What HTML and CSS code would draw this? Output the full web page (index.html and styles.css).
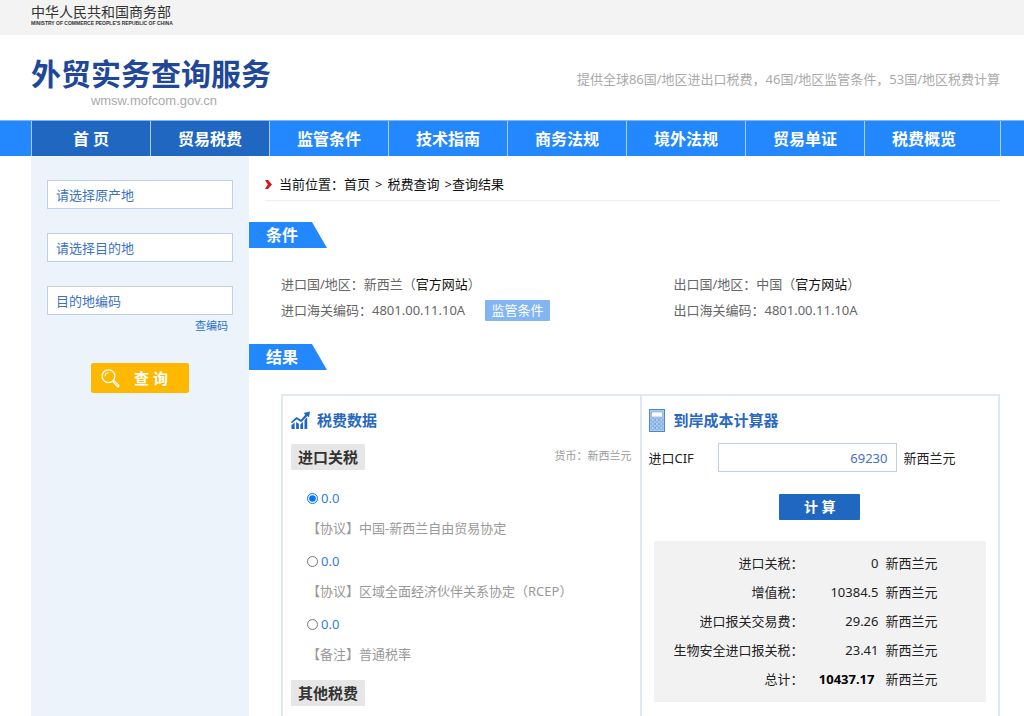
FILE: index.html
```html
<!DOCTYPE html>
<html lang="zh-CN">
<head>
<meta charset="utf-8">
<meta name="viewport" content="width=device-width, initial-scale=1">
<title>外贸实务查询服务</title>
<link rel="stylesheet" href="styles.css">
</head>
<body>
<div class="topbar">
  <div class="ministry">中华人民共和国商务部</div>
  <div class="ministry-en">MINISTRY OF COMMERCE PEOPLE'S REPUBLIC OF CHINA</div>
</div>
<header class="header">
  <div class="brand">
    <h1 class="brand-name">外贸实务查询服务</h1>
    <div class="brand-url">wmsw.mofcom.gov.cn</div>
  </div>
  <p class="slogan">提供全球86国/地区进出口税费，46国/地区监管条件，53国/地区税费计算</p>
</header>
<nav class="nav">
  <div class="nav-list">
    <a class="nav-item nav-active" href="#">首 页</a>
    <a class="nav-item nav-active" href="#">贸易税费</a>
    <a class="nav-item" href="#">监管条件</a>
    <a class="nav-item" href="#">技术指南</a>
    <a class="nav-item" href="#">商务法规</a>
    <a class="nav-item" href="#">境外法规</a>
    <a class="nav-item" href="#">贸易单证</a>
    <a class="nav-item" href="#">税费概览</a>
  </div>
</nav>
<div class="page">
  <form class="sidebar">
    <input class="field" type="text" placeholder="请选择原产地" aria-label="原产地">
    <input class="field" type="text" placeholder="请选择目的地" aria-label="目的地">
    <input class="field" type="text" placeholder="目的地编码" aria-label="目的地编码">
    <a class="code-link" href="#">查编码</a>
    <button class="search-btn" type="button">
      <svg class="search-icon" viewBox="0 0 19 19" fill="none" stroke="#fff" aria-hidden="true">
        <circle cx="7.5" cy="7.3" r="6.4" stroke-width="1.3"/>
        <path d="M3.8 7.3a3.7 3.7 0 0 1 3.7-3.6" stroke-width="1"/>
        <path d="M11.9 12.8l1.1-1.1 4.8 4.4c.8.9-.6 2.3-1.5 1.5z" stroke-width="1.1" fill="#ffd566"/>
      </svg>
      <span>查 询</span>
    </button>
  </form>
  <main class="content">
    <div class="crumbs">
      <svg class="crumb-icon" viewBox="0 0 7 9" aria-hidden="true"><path d="M0 0h3l4 4.5L3 9H0l2.8-4.5z" fill="#d81519"/></svg>
      <div class="crumb-path">
        <span>当前位置：<a href="#">首页</a></span>
        <span>&gt;</span>
        <a href="#">税费查询</a>
        <span>&gt;查询结果</span>
      </div>
    </div>
    <h2 class="ribbon">条件</h2>
    <div class="conditions">
      <div>进口国/地区：新西兰（<a href="#">官方网站</a>）</div>
      <div>出口国/地区：中国（<a href="#">官方网站</a>）</div>
      <div class="code-row">进口海关编码：4801.00.11.10A<button class="rule-btn" type="button">监管条件</button></div>
      <div>出口海关编码：4801.00.11.10A</div>
    </div>
    <h2 class="ribbon">结果</h2>
    <div class="results">
      <section class="panel tax">
        <h3 class="panel-title">
          <svg class="chart-icon" viewBox="0 0 20 19" aria-hidden="true">
            <g fill="#1f66c1"><path d="M.5 14.3L3.8 11.6V18.5H.5zM5.4 11l2.9 2v5.5H5.4zM9.8 13.6l2.9-2.7v7.6H9.8zM14.2 9.2l2.9-3.4v12.7h-2.9z"/><path d="M13.2 1.6L20 0l-1 6.2-1.8-1.5-6.4 6.6-4.8-3L1 12.3l-1-1.2 5.7-5.4 4.9 3.1 4.4-5.3z"/></g>
          </svg>
          税费数据
        </h3>
        <div class="tax-head">
          <h4 class="chip">进口关税</h4>
          <span class="currency">货币：新西兰元</span>
        </div>
        <div class="rates">
          <label class="rate"><input type="radio" name="rate" checked>0.0</label>
          <p class="note">【协议】中国-新西兰自由贸易协定</p>
          <label class="rate"><input type="radio" name="rate">0.0</label>
          <p class="note">【协议】区域全面经济伙伴关系协定（RCEP）</p>
          <label class="rate"><input type="radio" name="rate">0.0</label>
          <p class="note">【备注】普通税率</p>
        </div>
        <h4 class="chip">其他税费</h4>
      </section>
      <section class="panel calc">
        <h3 class="panel-title">
          <svg class="calc-icon" viewBox="0 0 16 23" aria-hidden="true">
            <rect x=".5" y=".5" width="15" height="22" fill="#a9c9ee" stroke="#4b86d0"/>
            <rect x="2.5" y="3" width="11" height="5" fill="#fff" stroke="#7facdf" stroke-width=".7"/>
            <g fill="#e4effb" stroke="#4f8ad2" stroke-width=".6">
              <path d="M2.3 10h2.8v2H2.3zM6.6 10h2.8v2H6.6zM10.9 10h2.8v2h-2.8zM2.3 14h2.8v2H2.3zM6.6 14h2.8v2H6.6zM10.9 14h2.8v2h-2.8zM2.3 18h2.8v2H2.3zM6.6 18h2.8v2H6.6zM10.9 18h2.8v2h-2.8z"/>
            </g>
          </svg>
          到岸成本计算器
        </h3>
        <div class="cif">
          <label class="cif-label" for="cif">进口CIF</label>
          <input class="field cif-input" id="cif" type="text" value="69230">
          <span>新西兰元</span>
        </div>
        <button class="calc-btn" type="button">计 算</button>
        <div class="totals">
          <table>
            <tr><th>进口关税：</th><td class="amount">0</td><td>新西兰元</td></tr>
            <tr><th>增值税：</th><td class="amount">10384.5</td><td>新西兰元</td></tr>
            <tr><th>进口报关交易费：</th><td class="amount">29.26</td><td>新西兰元</td></tr>
            <tr><th>生物安全进口报关税：</th><td class="amount">23.41</td><td>新西兰元</td></tr>
            <tr><th>总计：</th><td class="amount sum">10437.17</td><td>新西兰元</td></tr>
          </table>
        </div>
      </section>
    </div>
  </main>
</div>
</body>
</html>
```
FILE: styles.css
```css
* { box-sizing: border-box; }
body {
  margin: 0;
  min-height: 100vh;
  display: flex;
  flex-direction: column;
  background: #fff;
  color: #222;
  font: 13px/26px "Noto Sans", "Noto Sans CJK SC", sans-serif;
}
h1, h2, h3, h4, p { margin: 0; }
a { color: inherit; text-decoration: none; }
button { border: 0; padding: 0; font: inherit; color: #fff; }

.topbar { padding: 3px 24px 9px 31px; background: #f3f3f3; color: #333; }
.ministry { font-size: 14px; line-height: 17px; }
.ministry-en { font: bold 5px/6px "Liberation Sans", sans-serif; }

.header {
  display: flex;
  justify-content: space-between;
  height: 85px;
  padding: 18px 24px 0 31px;
}
.brand { text-align: center; }
.brand-name { font-size: 30px; line-height: 41px; color: #214799; }
.brand-url { padding-left: 6px; font: 13px/14px "Liberation Sans", sans-serif; color: #aaa; }
.slogan { padding-top: 13px; color: #aaa; }

.nav { padding: 0 23px 0 31px; background: #2387fd; border-top: 1px solid #7db6fb; }
.nav-list {
  display: grid;
  grid-template-columns: repeat(8, 119fr) 17fr;
  border-right: 1px solid #a8cffb;
}
.nav-item {
  padding-top: 1px;
  border-left: 1px solid #a8cffb;
  color: #fff;
  font-size: 16px;
  font-weight: bold;
  line-height: 34px;
  text-align: center;
}
.nav-active { background: #1f67c1; }

.page { flex: 1; display: flex; padding: 0 24px 0 31px; }
.sidebar {
  flex: 0 0 218px;
  display: flex;
  flex-direction: column;
  gap: 24px;
  padding: 24px 16px;
  background: #edf3fb;
}
.field {
  width: 100%;
  height: 29px;
  padding: 0 8px;
  border: 1px solid #bdd0e6;
  border-radius: 0;
  background: #fff;
  color: #4472c4;
  font: inherit;
}
.field::placeholder { color: #3b72c4; opacity: 1; }
.code-link {
  align-self: flex-end;
  margin-top: -23px;
  padding-right: 5px;
  color: #2674cf;
  font-size: 11px;
  line-height: 20px;
}
.search-btn {
  align-self: center;
  display: flex;
  align-items: center;
  gap: 14px;
  width: 98px;
  height: 30px;
  margin-top: 3px;
  padding-left: 10px;
  border-radius: 2px;
  background: #ffb800;
  font-size: 15px;
  font-weight: bold;
}
.search-icon { width: 19px; height: 19px; }

.content { flex: 1; min-width: 0; display: flex; flex-direction: column; }
.crumbs {
  display: flex;
  align-items: center;
  gap: 7px;
  height: 45px;
  margin-left: 16px;
  padding-top: 12px;
  border-bottom: 1px solid #eee;
  color: #111;
}
.crumb-icon { width: 7px; height: 9px; }
.crumb-path { display: flex; gap: 5px; }
.ribbon {
  width: 78px;
  margin-top: 21px;
  padding-left: 17px;
  background: #2387fd;
  clip-path: polygon(0 0, 63px 0, 100% 100%, 0 100%);
  color: #fff;
  font-size: 16px;
  line-height: 26px;
}
.conditions {
  display: grid;
  grid-template-columns: 393fr 327fr;
  margin-left: 32px;
  padding-top: 23px;
  color: #666;
}
.code-row { display: flex; align-items: center; gap: 20px; }
.conditions a { color: #111; }
.rule-btn {
  width: 65px;
  background: #82b5f4;
  border-radius: 1px;
  line-height: 21px;
}
.results {
  flex: 1;
  display: grid;
  grid-template-columns: 357fr 359fr;
  margin: 24px 0 0 32px;
  border: 2px solid #e0e8f0;
  border-bottom: 0;
}
.panel { min-width: 0; }
.tax { padding: 11px 8px 0; }
.calc { padding: 11px 12px 0; border-left: 2px solid #e0e8f0; }
.panel-title {
  display: flex;
  align-items: center;
  gap: 7px;
  color: #2868c0;
  font-size: 15px;
}
.chart-icon { width: 19px; height: 19px; }
.calc-icon { width: 16px; height: 23px; }
.calc .panel-title { gap: 9px; margin-left: -5px; }
.tax-head { display: flex; justify-content: space-between; margin-top: 11px; }
.chip {
  width: fit-content;
  padding: 0 7px;
  border-radius: 1px;
  background: #e6e6e6;
  color: #333;
  font-size: 15px;
}
.currency { color: #999; font-size: 11px; line-height: 24px; }
.rates { padding: 13px 0 8px 16px; }
.rate { display: flex; align-items: center; gap: 3px; color: #2f80d8; line-height: 30px; }
.rate input { width: 11px; height: 11px; margin: 0; }
.note { margin-bottom: 3px; color: #999; line-height: 30px; white-space: nowrap; }

.cif { display: flex; align-items: center; gap: 7px; margin: 10px 0 0 -5px; }
.cif-label { width: 62px; }
.cif-input { width: 179px; text-align: right; }
.calc-btn {
  display: block;
  width: 81px;
  margin: 22px auto 21px;
  border-radius: 1px;
  background: #1f67c1;
  font-size: 14px;
  font-weight: bold;
}
.totals { padding: 7px 0 9px; background: #f2f2f2; }
table { border-collapse: collapse; }
th, td { padding: 0; height: 29px; font-weight: normal; text-align: right; white-space: nowrap; }
th { width: 150px; }
td { padding-left: 7px; }
.amount { width: 75px; }
.amount.sum { padding-right: 4px; color: #000; font-weight: bold; }
```
